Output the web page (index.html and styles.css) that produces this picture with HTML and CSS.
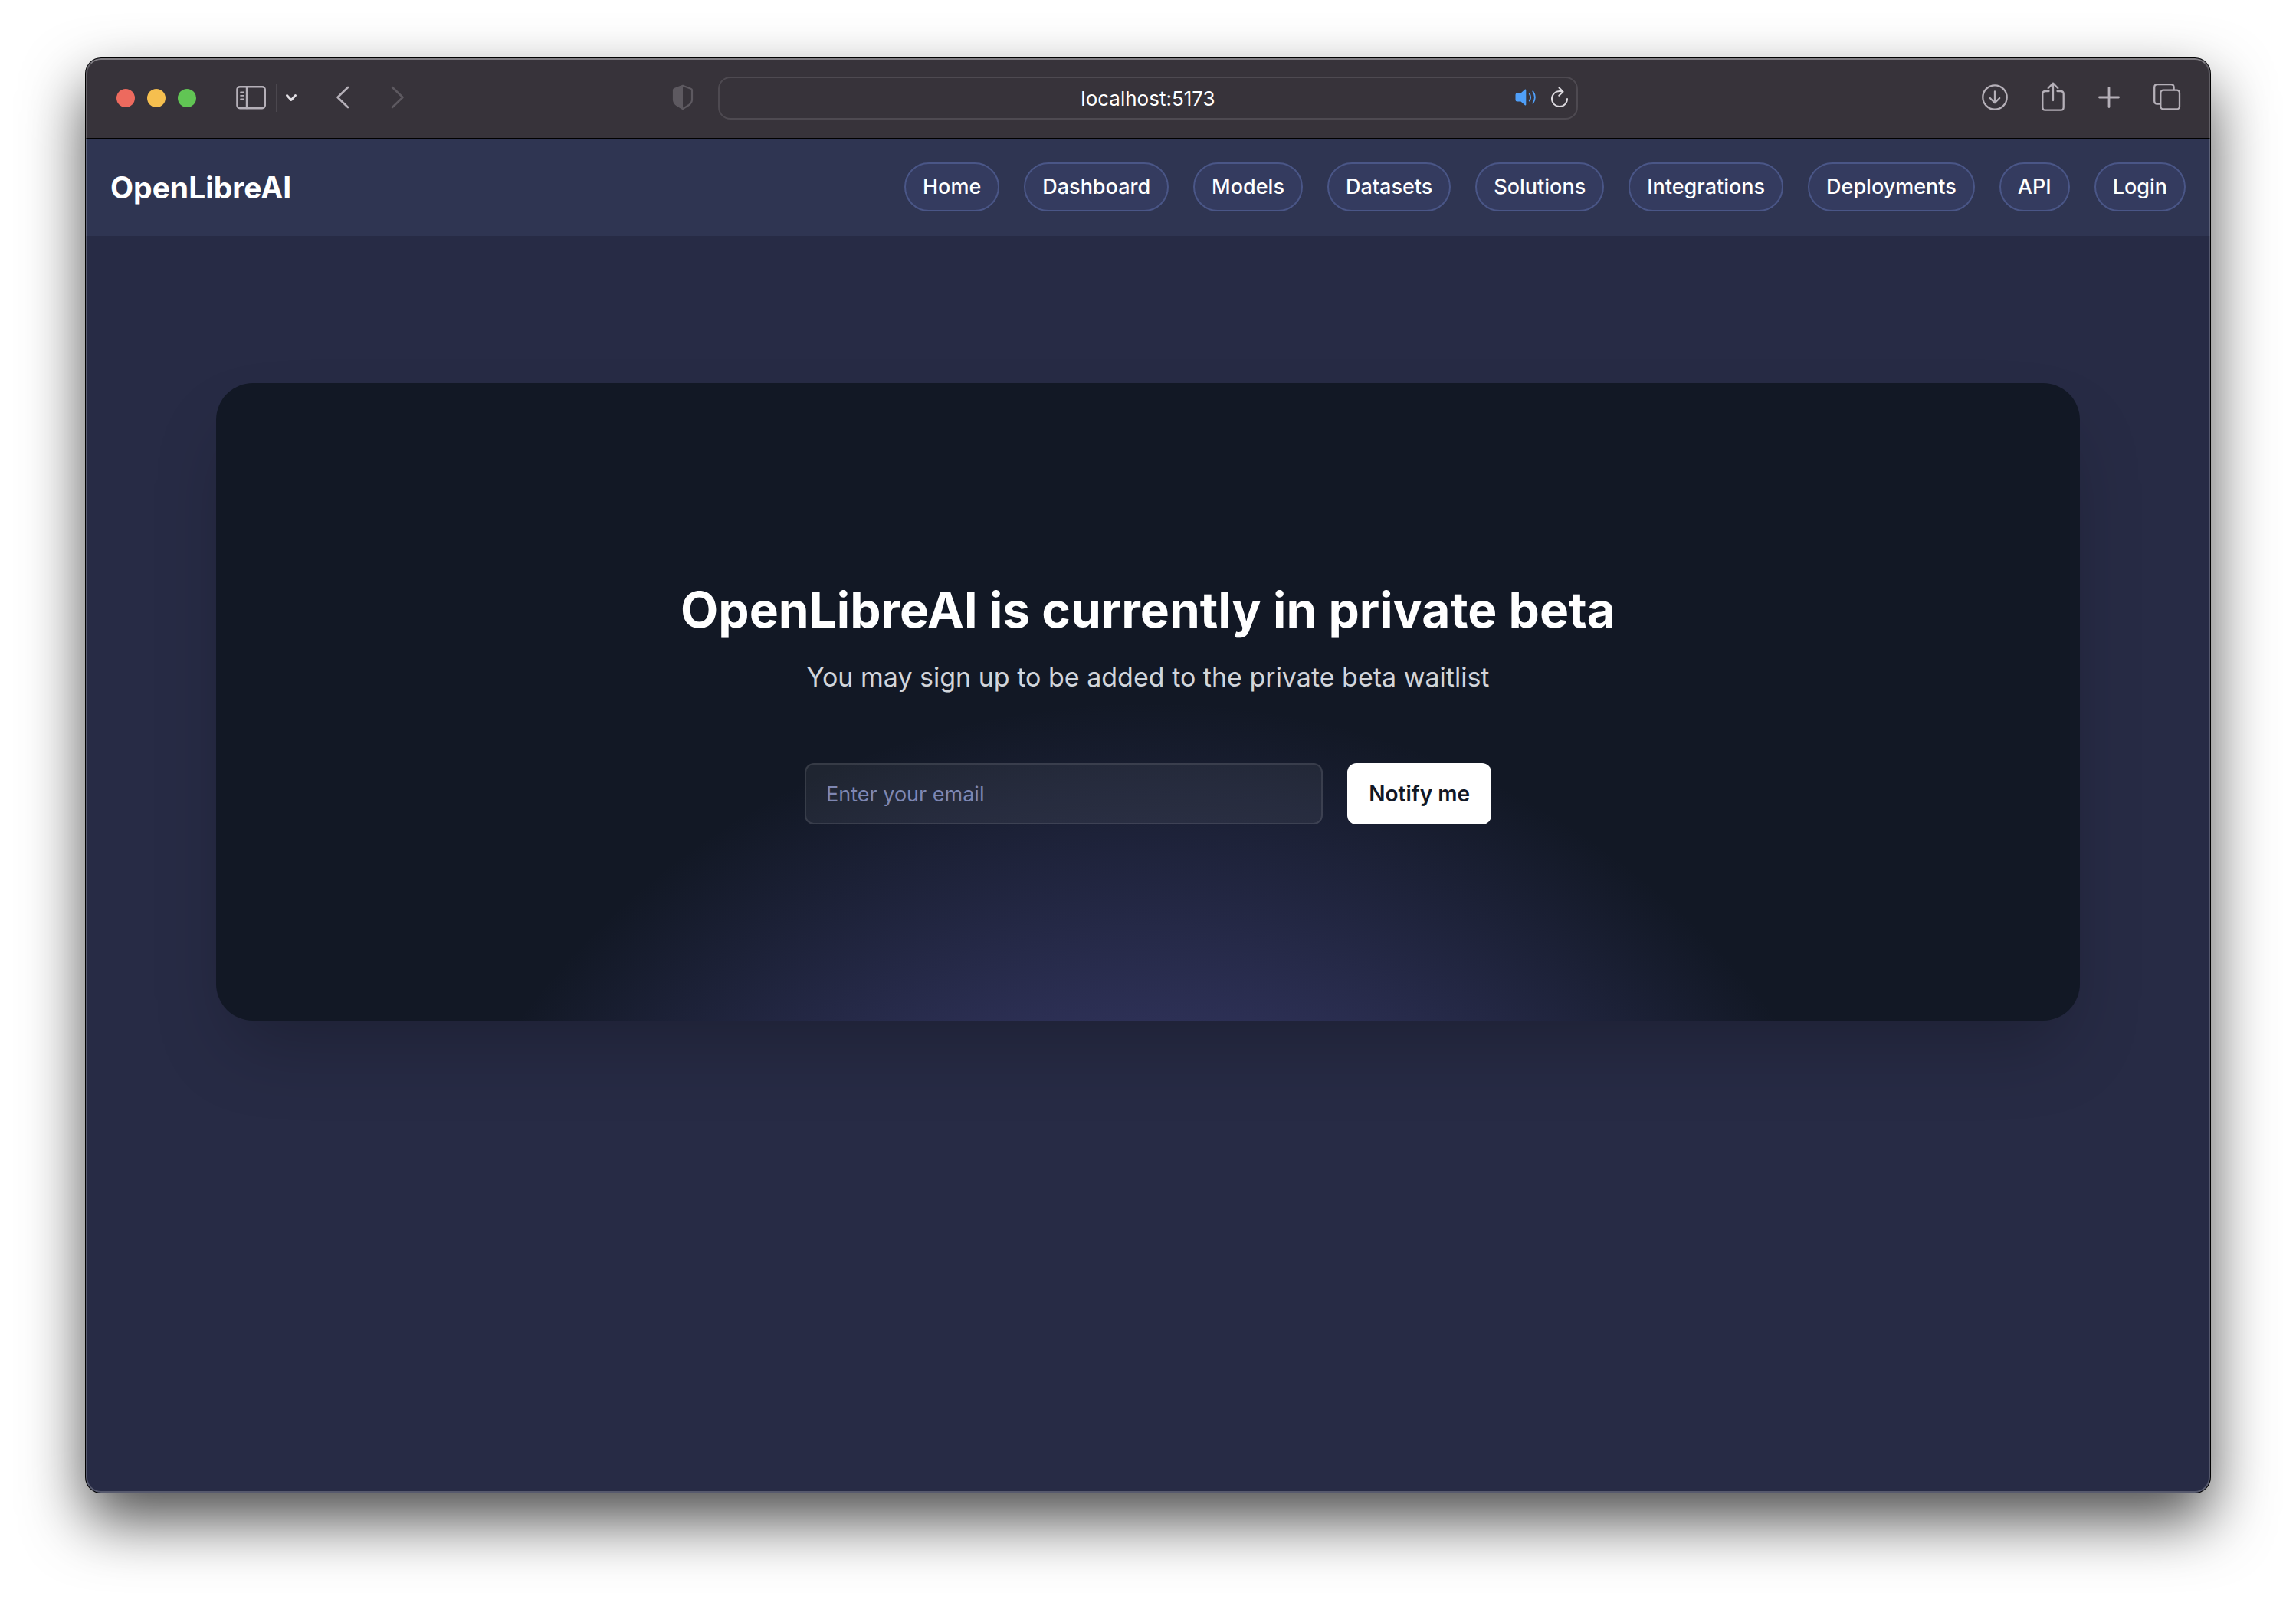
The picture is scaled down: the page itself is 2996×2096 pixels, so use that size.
FILE: index.html
```html
<!DOCTYPE html>
<html lang="en">
<head>
<meta charset="utf-8">
<title>OpenLibreAI</title>
<link rel="stylesheet" href="styles.css">
</head>
<body>
<div class="window">
  <div class="toolbar">
    <div class="toolbar-left">
      <div class="lights"><span class="light close"></span><span class="light minimize"></span><span class="light maximize"></span></div>
      <button class="tool sidebar-tool" aria-label="Show sidebar">
        <svg width="40" height="32" viewBox="0 0 40 32" fill="none" stroke="currentColor" stroke-width="2.4" stroke-linecap="round"><rect x="1.4" y="2.2" width="36.4" height="28" rx="3.6"/><path d="M14 2.5v27.5"/><path stroke-width="1.6" d="M6 9.4h4M6 13.9h4M6 18.4h4"/></svg>
      </button>
      <span class="divider"></span>
      <button class="tool menu-tool" aria-label="Tab groups">
        <svg width="16" height="12" viewBox="0 0 16 12" fill="none" stroke="currentColor" stroke-width="3" stroke-linecap="round" stroke-linejoin="round"><path d="M2.5 3.5 8 9.500l5.500-6"/></svg>
      </button>
      <button class="tool back-tool" aria-label="Back">
        <svg width="18" height="30" viewBox="0 0 18 30" fill="none" stroke="currentColor" stroke-width="2.600" stroke-linecap="round" stroke-linejoin="round"><path d="M16 2 2.500 15 16 28"/></svg>
      </button>
      <button class="tool forward-tool" aria-label="Forward" disabled>
        <svg width="18" height="30" viewBox="0 0 18 30" fill="none" stroke="currentColor" stroke-width="2.600" stroke-linecap="round" stroke-linejoin="round"><path d="M2 2 15.500 15 2 28"/></svg>
      </button>
      <button class="tool shield-tool" aria-label="Privacy report">
        <svg width="28" height="34" viewBox="0 0 28 34"><path d="M14 1.800 25 6c.6.2 1 .8 1 1.400V20c0 3-1.500 5.200-4 7l-8 5-8-5c-2.500-1.800-4-4-4-7V7.400C2 6.800 2.400 6.200 3 6z" fill="none" stroke="currentColor" stroke-width="2.200" stroke-linejoin="round"/><path d="M14 1.800 3 6c-.6.200-1 .8-1 1.400V20c0 3 1.500 5.200 4 7l8 5z" fill="currentColor"/></svg>
      </button>
    </div>
    <div class="address">
      <span class="url">localhost:5173</span>
      <div class="address-tools">
        <button class="tool sound-tool" aria-label="Mute tab">
          <svg width="28" height="24" viewBox="0 0 28 24"><path d="M14.300 2.200v19.600c0 .8-.9 1-1.500.5L7.500 17.500H3c-1.600 0-2.500-.8-2.500-2.500V9C.5 7.300 1.400 6.500 3 6.500h4.500l5.300-4.800c.6-.5 1.500-.3 1.500.5z" fill="currentColor"/><path d="M18.800 7.500c1.700 2.800 1.700 6.200 0 9M23.300 4.300c3.200 4.800 3.200 10.600 0 15.400" fill="none" stroke="currentColor" stroke-width="1.800" stroke-linecap="round"/></svg>
        </button>
        <button class="tool reload-tool" aria-label="Reload">
          <svg width="24" height="28" viewBox="0 0 24 28" fill="none" stroke="currentColor" stroke-width="2" stroke-linecap="round" stroke-linejoin="round"><path d="M16 6.700C14.800 6.200 13.400 6 12 6 6.400 6 2 10.400 2 16s4.400 10 10 10 10-4.400 10-10M11.500 1.500 16.500 6.800l-5.200 5"/></svg>
        </button>
      </div>
    </div>
    <div class="toolbar-right">
      <button class="tool" aria-label="Downloads">
        <svg width="34" height="34" viewBox="0 0 34 34" fill="none" stroke="currentColor" stroke-width="2.300" stroke-linecap="round" stroke-linejoin="round"><circle cx="17" cy="17" r="15.700"/><path d="M17 9.500v14.500M10.800 18l6.200 6.300 6.200-6.300"/></svg>
      </button>
      <button class="tool share-tool" aria-label="Share">
        <svg width="30" height="38" viewBox="0 0 30 38" fill="none" stroke="currentColor" stroke-width="2.300" stroke-linecap="round" stroke-linejoin="round"><path d="M9.500 12H5c-2.300 0-3.700 1.400-3.700 3.700V33c0 2.300 1.400 3.700 3.700 3.700h20c2.300 0 3.700-1.400 3.700-3.700V15.700c0-2.300-1.400-3.700-3.700-3.700h-4.500M15 24V2M8.700 8 15 1.600 21.300 8"/></svg>
      </button>
      <button class="tool" aria-label="New tab">
        <svg width="28" height="28" viewBox="0 0 28 28" fill="none" stroke="currentColor" stroke-width="2.800" stroke-linecap="round"><path d="M14 1.500v25M1.500 14h25"/></svg>
      </button>
      <button class="tool" aria-label="Show all tabs">
        <svg width="36" height="36" viewBox="0 0 36 36" fill="none" stroke="currentColor" stroke-width="2.300" stroke-linejoin="round"><path d="M9.300 26.500H5c-2.500 0-3.800-1.300-3.800-3.800V5C1.200 2.500 2.500 1.200 5 1.200h17.800c2.500 0 3.800 1.300 3.800 3.800v3.600"/><rect x="9.300" y="8.600" width="24.700" height="24.900" rx="3.800"/></svg>
      </button>
    </div>
  </div>
  <header class="site-header">
    <a class="brand" href="#">OpenLibreAI</a>
    <nav class="nav">
      <a class="pill" href="#">Home</a>
      <a class="pill" href="#">Dashboard</a>
      <a class="pill" href="#">Models</a>
      <a class="pill" href="#">Datasets</a>
      <a class="pill" href="#">Solutions</a>
      <a class="pill" href="#">Integrations</a>
      <a class="pill" href="#">Deployments</a>
      <a class="pill" href="#">API</a>
      <a class="pill" href="#">Login</a>
    </nav>
  </header>
  <main class="container">
    <section class="card">
      <h1 class="title">OpenLibreAI is currently in private beta</h1>
      <p class="subtitle">You may sign up to be added to the private beta waitlist</p>
      <form class="signup">
        <input class="email" type="email" placeholder="Enter your email" aria-label="Email address">
        <button class="notify" type="submit">Notify me</button>
      </form>
    </section>
  </main>
</div>
</body>
</html>
```
FILE: styles.css
```css
* {
  box-sizing: border-box;
}

body {
  margin: 0;
  padding: 76px 112px 148px;
  background: #fff;
  color: #fff;
  font-family: Inter, "Liberation Sans", sans-serif;
  font-size: 27px;
}

button,
input {
  font: inherit;
}

a {
  color: inherit;
  text-decoration: none;
}

.window {
  position: relative;
  min-height: calc(100vh - 224px);
  overflow: hidden;
  border-radius: 20px;
  background: #272b45;
  box-shadow: 0 0 0 1px #000, 0 36px 80px rgba(0, 0, 0, 0.7);
}

/* Light rim along the inside of the window edge */
.window::after {
  content: "";
  position: absolute;
  inset: 0;
  border: 2px solid rgba(255, 255, 255, 0.22);
  border-top-color: rgba(255, 255, 255, 0.36);
  border-radius: 20px;
  pointer-events: none;
}

.toolbar {
  display: grid;
  grid-template-columns: 1fr minmax(0, 1122px) 1fr;
  align-items: center;
  height: 104px;
  background: #37333a;
  color: #b5b0b8;
}

.toolbar-left,
.toolbar-right,
.lights,
.address-tools {
  display: flex;
  align-items: center;
}

.toolbar-left {
  padding: 0 32px 0 40px;
}

.toolbar-right {
  justify-content: flex-end;
  gap: 44px;
  padding-right: 38px;
}

.lights {
  gap: 16px;
  margin-right: 52px;
}

.light {
  width: 24px;
  height: 24px;
  border-radius: 50%;
}

.close {
  background: #ed6a5e;
}

.minimize {
  background: #f5bf4f;
}

.maximize {
  background: #61c554;
}

.tool {
  display: flex;
  padding: 0 0 2px;
  border: 0;
  background: none;
  color: inherit;
}

.divider {
  width: 2px;
  height: 36px;
  margin: 0 10px 0 12px;
  background: #4b474e;
}

.menu-tool {
  color: #e2dfe4;
}

.back-tool {
  margin-left: 50px;
}

.forward-tool {
  margin-left: 54px;
  color: #5d5960;
}

.shield-tool {
  margin-left: auto;
  color: #5d5960;
}

.share-tool {
  padding-bottom: 4px;
}

.address {
  display: grid;
  grid-template-columns: 1fr auto 1fr;
  align-items: center;
  height: 56px;
  padding: 0 10px;
  border: 2px solid #4e4a51;
  border-radius: 16px;
}

.url {
  grid-column: 2;
  color: #fff;
  font-size: 26px;
}

.address-tools {
  justify-content: flex-end;
  gap: 18px;
}

.sound-tool {
  color: #4f9ff8;
}

.reload-tool {
  color: #dedbe0;
}

.site-header {
  display: flex;
  align-items: center;
  justify-content: space-between;
  height: 128px;
  padding: 0 32px;
  background: #2f3552;
  box-shadow: inset 0 1px #000;
}

.brand {
  font-size: 39px;
  font-weight: 700;
}

.nav {
  display: flex;
  gap: 32px;
}

.pill {
  height: 64px;
  padding: 0 22px;
  border: 2px solid #4a5687;
  border-radius: 32px;
  background: #343b5f;
  font-weight: 500;
  line-height: 60px;
}

.container {
  max-width: 2560px;
  margin: 0 auto;
  padding: 192px 64px;
}

.card {
  padding: 256px 64px;
  border-radius: 48px;
  background: radial-gradient(circle 1024px at 50% 1440px, rgba(112, 108, 206, 0.7), rgba(112, 108, 206, 0)) #121825;
  box-shadow: 0 50px 100px -24px rgba(0, 0, 0, 0.25);
  text-align: center;
}

.title {
  margin: 0;
  font-size: 64px;
  font-weight: 700;
  line-height: 80px;
}

.subtitle {
  margin: 16px 0 0;
  color: #d1d5db;
  font-size: 34px;
  line-height: 64px;
}

.signup {
  display: flex;
  gap: 32px;
  max-width: 896px;
  margin: 80px auto 0;
}

.email {
  flex: 1;
  min-width: 0;
  height: 80px;
  padding: 0 26px;
  border: 2px solid rgba(255, 255, 255, 0.1);
  border-radius: 12px;
  background: rgba(255, 255, 255, 0.06);
  color: #fff;
}

.email::placeholder {
  color: #7e87b3;
  opacity: 1;
}

.notify {
  height: 80px;
  padding: 0 28px;
  border: 0;
  border-radius: 12px;
  background: #fff;
  color: #111827;
  font-size: 28px;
  font-weight: 600;
}
```
